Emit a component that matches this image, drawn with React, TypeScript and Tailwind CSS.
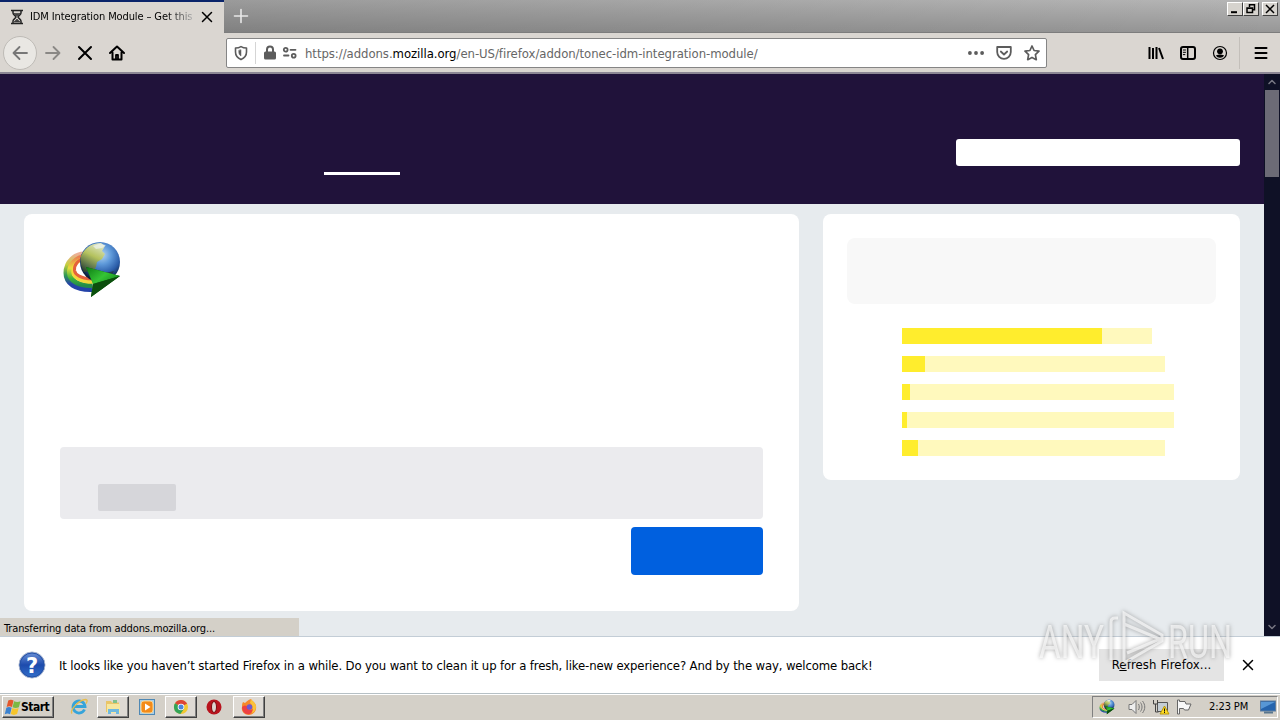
import type { ReactNode } from "react";
import clsx from "clsx";

interface Rating {
  total: number;
  filled: number;
}

const ratings: Rating[] = [
  { total: 250, filled: 200 },
  { total: 263, filled: 23 },
  { total: 272, filled: 8 },
  { total: 272, filled: 5 },
  { total: 263, filled: 16 },
];

function IdmLogo({ className }: { className?: string }) {
  return (
    <svg viewBox="0 0 60 60" className={className}>
      <defs>
        <radialGradient id="globe" cx="0.55" cy="0.32" r="0.66">
          <stop offset="0" stopColor="#b4d4f0" />
          <stop offset="0.35" stopColor="#5f9ada" />
          <stop offset="0.7" stopColor="#2a5ca8" />
          <stop offset="1" stopColor="#0a1a33" />
        </radialGradient>
        <linearGradient id="land" x1="0.7" y1="0" x2="0.3" y2="1">
          <stop offset="0" stopColor="#dfe6c8" />
          <stop offset="0.45" stopColor="#b4c25e" />
          <stop offset="1" stopColor="#3c4f1d" stopOpacity="0.7" />
        </linearGradient>
        <linearGradient id="arrow" x1="0" y1="0" x2="1" y2="0.6">
          <stop offset="0" stopColor="#0d7a12" />
          <stop offset="0.6" stopColor="#35c435" />
          <stop offset="1" stopColor="#1a9420" />
        </linearGradient>
        <linearGradient id="ringOuter" x1="0" y1="0" x2="0" y2="1">
          <stop offset="0" stopColor="#edb098" />
          <stop offset="0.3" stopColor="#c6cf3e" />
          <stop offset="0.6" stopColor="#2f9a53" />
          <stop offset="0.85" stopColor="#2442a8" />
        </linearGradient>
        <linearGradient id="ringMiddle" x1="0" y1="0" x2="0" y2="1">
          <stop offset="0" stopColor="#ea7b52" />
          <stop offset="0.4" stopColor="#e9dc3b" />
          <stop offset="0.75" stopColor="#3eb43a" />
          <stop offset="1" stopColor="#238a4b" />
        </linearGradient>
      </defs>
      <g fill="none">
        <path d="M24 14C13 13 4 22 4 33c0 10 9 17 26 16.500" stroke="url(#ringOuter)" strokeWidth="5" />
        <path d="M24 16.500C14 17 7 25 7.500 33c.5 7 8 13 23 12.500" stroke="url(#ringMiddle)" strokeWidth="5" />
        <path d="M24 18.500C16 19 10.500 26 11 32c.5 5 7 10 20 10" stroke="#f3d63b" strokeWidth="3.500" />
        <path d="M24 18C16 19 12 25 12.500 30.500c.5 4 6 8 18 8.500" stroke="#e5613b" strokeWidth="3" />
      </g>
      <circle cx="38" cy="22" r="20" fill="url(#globe)" />
      <path
        d="M19 16C24 6 31 3 39 3l4 3-3 5 3 3-3 5-5 3-1 5-3 4-9 1c-3-5-4-10-3-16z"
        fill="url(#land)"
      />
      <path d="M31 6l6-2 7 1-4 3-6 1z" fill="#eef4ee" opacity="0.7" />
      <path d="M43 33l9-2-4 7-7 4z" fill="#26342b" opacity="0.65" />
      <path d="M24 27l34 9-29 21 2-14z" fill="#0a5f0c" />
      <path d="M24 27l34 9-27 8z" fill="url(#arrow)" />
      <path d="M31 44l27-8-29 21z" fill="#0c4f0d" />
    </svg>
  );
}

function StrokeIcon({
  children,
  className = "size-4",
}: {
  children: ReactNode;
  className?: string;
}) {
  return (
    <svg
      viewBox="0 0 16 16"
      className={className}
      fill="none"
      stroke="currentColor"
      strokeWidth="2"
      strokeLinecap="round"
      strokeLinejoin="round"
    >
      {children}
    </svg>
  );
}

function CloseIcon({ className }: { className?: string }) {
  return (
    <StrokeIcon className={className}>
      <path d="M2 2l12 12M14 2L2 14" />
    </StrokeIcon>
  );
}

function WindowButton({ children, className }: { children: ReactNode; className?: string }) {
  return (
    <button
      className={clsx(
        "flex h-[14px] w-4 items-center justify-center border border-t-white border-l-white border-r-[#404040] border-b-[#404040] bg-[#d6d3ce]",
        className,
      )}
    >
      <svg viewBox="0 0 12 12" className="size-3 shrink-0" fill="none" stroke="#000" strokeWidth="1.5">
        {children}
      </svg>
    </button>
  );
}

function TabStrip() {
  return (
    <div className="flex h-[33px] shrink-0 bg-linear-to-b from-[#b6b6b6] to-[#969696]">
      <div className="flex w-[224px] items-center border-t-2 border-[#0a246a] bg-[#dad6d1] pb-px pl-[10px]">
        <svg viewBox="0 0 14 16" className="h-4 w-[14px] shrink-0" fill="none" stroke="#222" strokeWidth="1.5">
          <path d="M1 1.500h12M1 14.500h12M3 2v2c0 2 3 3 3 4s-3 2-3 4v2M11 2v2c0 2-3 3-3 4s3 2 3 4v2" />
          <path d="M4 4.500h6L7 7zM4 13l3-3 3 3z" fill="#444" strokeWidth="0.500" />
        </svg>
        <span className="mt-px ml-[6px] w-[164px] overflow-hidden bg-linear-to-r from-black from-80% to-[#bbb] bg-clip-text text-[11px] tracking-[-0.11px] whitespace-nowrap text-transparent">
          IDM Integration Module – Get this
        </span>
        <CloseIcon className="ml-[7px] size-3 shrink-0" />
      </div>
      <div className="flex flex-1 border-b border-[#7d7d7d] bg-linear-to-r from-black/15 to-transparent">
        <StrokeIcon className="mt-2 ml-[9px] size-4 text-[#e8e8e8]">
          <path d="M8 1.500v13M1.500 8h13" strokeWidth="1.600" />
        </StrokeIcon>
        <div className="mt-[2px] mr-[2px] ml-auto flex">
          <WindowButton>
            <path d="M2 9.200h6" strokeWidth="2" />
          </WindowButton>
          <WindowButton>
            <path d="M4.500 4V1.800h5v5H8M2 5h5.500v4.500H2zM2 5.200h5.500" />
          </WindowButton>
          <WindowButton className="ml-[3px]">
            <path d="M2 2l8 8M10 2l-8 8" />
          </WindowButton>
        </div>
      </div>
    </div>
  );
}

function UrlBar() {
  return (
    <div className="ml-[101px] flex h-[30px] w-[821px] items-center rounded-xs border border-[#858585] bg-white text-[#5c5c5c]">
      <StrokeIcon className="ml-[6px] size-4">
        <path d="M8 1.600C6.500 2.500 4.500 3 2.500 3v4c0 4 2 6 5.500 7.600C11.500 13 13.500 11 13.500 7V3c-2 0-4-.5-5.500-1.400z" strokeWidth="1.600" />
        <path d="M8 5v6C6.500 10 5.800 9 5.800 7V5.500z" fill="currentColor" strokeWidth="0.500" />
      </StrokeIcon>
      <div className="ml-[6px] h-[22px] w-px bg-[#d5d5d5]" />
      <StrokeIcon className="ml-[6px] size-4">
        <path d="M5 7V4.500a3 3 0 0 1 6 0V7" />
        <rect x="3" y="7.500" width="10" height="6" rx="0.500" fill="currentColor" />
      </StrokeIcon>
      <StrokeIcon className="ml-1 size-4">
        <g strokeWidth="1.800">
          <circle cx="3.700" cy="4.800" r="1.900" />
          <path d="M8.500 4.800H13.500M2 10.500h4.500" />
          <circle cx="11.700" cy="10.800" r="1.900" />
        </g>
      </StrokeIcon>
      <span className="mt-[2px] ml-[7px] text-[13px] tracking-[-0.05px] whitespace-nowrap text-[#666]">
        https://addons.<span className="text-black">mozilla.org</span>
        /en-US/firefox/addon/tonec-idm-integration-module/
      </span>
      <div className="mr-[6px] ml-auto flex gap-3">
        <StrokeIcon>
          <g fill="currentColor" stroke="none">
            <circle cx="1.900" cy="8" r="1.900" />
            <circle cx="8" cy="8" r="1.900" />
            <circle cx="14.100" cy="8" r="1.900" />
          </g>
        </StrokeIcon>
        <StrokeIcon>
          <path d="M1.200 2h13.600v5a6.800 6.800 0 0 1-13.600 0zM4.800 6.500L8 9.500l3.200-3" strokeWidth="1.800" />
        </StrokeIcon>
        <StrokeIcon>
          <path d="M8 1l2.100 4.500 4.900.7-3.600 3.500.9 5L8 12.400l-4.300 2.300.9-5L1 6.200l4.900-.7z" strokeWidth="1.700" />
        </StrokeIcon>
      </div>
    </div>
  );
}

function NavToolbar() {
  return (
    <div className="flex h-[41px] shrink-0 items-center border-b-2 border-b-[#8c8794] bg-[#dad6d1]">
      <button className="ml-[3px] flex size-[34px] shrink-0 items-center justify-center rounded-full border border-[#bebbb6] bg-[#e9e7e3] text-[#777]">
        <StrokeIcon className="size-4">
          <path d="M15 8H1.500M7.500 2L1.500 8l6 6" strokeWidth="1.800" />
        </StrokeIcon>
      </button>
      <StrokeIcon className="ml-2 size-4 text-[#8a8885]">
        <path d="M1 8h13.500M8.500 2l6 6-6 6" strokeWidth="1.800" />
      </StrokeIcon>
      <CloseIcon className="ml-4 size-4" />
      <StrokeIcon className="ml-4 size-4">
        <path d="M1 8l7-6.500L15 8M3.500 7.500v7h9v-7" />
        <path d="M7 14v-4h2v4" strokeWidth="1.800" />
      </StrokeIcon>
      <UrlBar />
      <StrokeIcon className="ml-[101px] size-4">
        <path d="M1.500 2v12M5 3v11M8.500 2v12M11 3l4 11" strokeLinecap="butt" />
      </StrokeIcon>
      <StrokeIcon className="ml-4 size-4">
        <rect x="1" y="2" width="14" height="12" rx="2" />
        <path d="M7.700 2v12" strokeWidth="1.500" />
        <path d="M3.300 5h2.200M3.300 7.300h2.200M3.300 9.600h1.600" strokeWidth="1" />
      </StrokeIcon>
      <StrokeIcon className="ml-4 size-4">
        <circle cx="8" cy="8" r="6.500" strokeWidth="1.200" />
        <circle cx="8" cy="6.300" r="2.900" fill="currentColor" stroke="none" />
        <path d="M3.800 10.500c3-1.500 5.400-1.500 8.400 0A5 5 0 0 1 8 12.700a5 5 0 0 1-4.200-2.200z" fill="currentColor" stroke="none" />
      </StrokeIcon>
      <div className="ml-[11px] h-8 w-px bg-[#c3bfba]" />
      <StrokeIcon className="ml-[13px] size-4">
        <path d="M2.500 3h11M2.500 8h11M2.500 13h11" />
      </StrokeIcon>
    </div>
  );
}

function AddonCard() {
  return (
    <div className="flex h-[397px] w-[775px] flex-col rounded-lg bg-white px-9 pt-[26px]">
      <IdmLogo className="ml-[2px] size-[60px]" />
      <div className="mt-[147px] h-[72px] shrink-0 rounded bg-[#ebebee] pt-[37px] pl-[38px]">
        <div className="h-[27px] w-[78px] rounded-xs bg-[#d6d6da]" />
      </div>
      <button className="mt-2 h-12 w-[132px] shrink-0 self-end rounded bg-[#0060df]" />
    </div>
  );
}

function RatingsCard() {
  return (
    <div className="h-[266px] w-[417px] rounded-lg bg-white px-6 pt-6">
      <div className="h-[66px] rounded-lg bg-[#f8f8f8]" />
      <div className="mt-6 ml-[55px] flex flex-col gap-3">
        {ratings.map((rating, i) => (
          <div key={i} className="h-4 bg-[#fff9bd]" style={{ width: rating.total }}>
            <div className="h-4 bg-[#ffed2d]" style={{ width: rating.filled }} />
          </div>
        ))}
      </div>
    </div>
  );
}

function Page() {
  return (
    <div className="relative flex h-[562px] shrink-0">
      <main className="flex flex-1 flex-col bg-[#e7ebee]">
        <header className="flex h-[130px] items-start bg-[#20123a]">
          <div className="mt-[98px] ml-[324px] h-[3px] w-[76px] bg-white" />
          <div className="mt-[65px] mr-6 ml-auto h-[27px] w-[284px] rounded-[3px] bg-white" />
        </header>
        <div className="flex gap-6 px-6 pt-[10px]">
          <AddonCard />
          <RatingsCard />
        </div>
      </main>
      <div className="flex w-4 flex-col items-center bg-[#0f1126] text-[#777782]">
        <StrokeIcon className="mt-1 size-2">
          <path d="M2 11l6-6 6 6" strokeWidth="3" />
        </StrokeIcon>
        <div className="mt-1 h-[87px] w-[14px] bg-[#6c6b76]" />
        <StrokeIcon className="mt-auto mb-[5px] size-2">
          <path d="M2 5l6 6 6-6" strokeWidth="3" />
        </StrokeIcon>
      </div>
      <div className="absolute bottom-0 left-0 flex h-[18px] w-[299px] items-center bg-[#d4d0c8] pt-1 pl-[4px] text-[11px] tracking-[-0.13px]">
        Transferring data from addons.mozilla.org...
      </div>
    </div>
  );
}

function Watermark() {
  return (
    <div className="pointer-events-none absolute top-[606px] left-[1035px]">
      <svg viewBox="0 0 204 66" className="h-[66px] w-[204px] drop-shadow-[0_0_2px_#777]">
        <g fill="#fff" fillOpacity="0.65" fontFamily="Roboto, sans-serif" fontSize="47">
          <text x="4" y="52" textLength="65" lengthAdjust="spacingAndGlyphs">ANY</text>
          <text x="133" y="52" textLength="64" lengthAdjust="spacingAndGlyphs">RUN</text>
        </g>
        <g fill="none" stroke="#fff" strokeOpacity="0.65" strokeWidth="3">
          <path d="M83 12h-3q-4 0-4 4v38" />
          <path d="M89 56V7l38 22v6L89 57M89 18l36 15-33 14" />
        </g>
      </svg>
    </div>
  );
}

function NotificationBar() {
  return (
    <div className="flex h-[57px] shrink-0 items-center border-t border-[#c3cdd6] bg-white text-[13px]">
      <svg viewBox="0 0 28 28" className="ml-[18px] size-7">
        <defs>
          <linearGradient id="help" x1="0" y1="0" x2="0" y2="1">
            <stop offset="0" stopColor="#6f94d8" />
            <stop offset="0.500" stopColor="#1d4bad" />
            <stop offset="1" stopColor="#3471cc" />
          </linearGradient>
        </defs>
        <circle cx="14" cy="14" r="13" fill="url(#help)" stroke="#a8b4cd" />
        <circle cx="14" cy="14" r="12" fill="none" stroke="#2451a6" />
        <text x="14" y="21.500" fill="#fff" fontSize="21" fontWeight="bold" textAnchor="middle" fontFamily="DejaVu Sans">
          ?
        </text>
      </svg>
      <span className="mt-[2px] ml-[13px] tracking-[-0.14px] whitespace-nowrap">
        It looks like you haven’t started Firefox in a while. Do you want to clean it up for a fresh, like-new experience? And by the way, welcome back!
      </span>
      <button className="mr-[18px] ml-auto h-8 w-[125px] bg-[#e4e4e4] tracking-[0.12px] whitespace-nowrap">
        R<span className="underline">e</span>fresh Firefox...
      </button>
      <CloseIcon className="mr-[26px] size-3" />
    </div>
  );
}

function TaskButton({ children }: { children: ReactNode }) {
  return (
    <div className="flex h-[22px] w-8 items-center justify-center border border-t-white border-l-white border-r-[#404040] border-b-[#404040] bg-[#dedad4] shadow-[inset_-1px_-1px_#808080]">
      {children}
    </div>
  );
}

function Taskbar() {
  return (
    <footer className="flex h-[27px] shrink-0 items-center border-t border-[#b6c0c5] bg-[#d4d0c8] pb-px pt-px shadow-[inset_0_1px_white]">
      <button className="ml-[2px] flex h-[22px] w-[52px] items-center border border-t-white border-l-white border-r-[#404040] border-b-[#404040] pl-px text-[12px] font-bold tracking-[-0.5px] shadow-[inset_-1px_-1px_#808080]">
        <svg viewBox="0 0 16 16" className="size-[17px] shrink-0">
          <path d="M4 1.500c2-1 3-1 5 0L7.500 7.500c-2-1-3-1-5 0z" fill="#e4572b" />
          <path d="M9.500 2c2 1 4 1 6 0L14 7.700c-2 1-4 1-6 0z" fill="#7cb843" />
          <path d="M2.200 8.300c2-1 3-1 5 0l-1.500 6c-2-1-3-1-5 0z" fill="#3c82cf" />
          <path d="M7.800 8.500c2 1 4 1 6 0l-1.500 5.700c-2 1-4 1-6 0z" fill="#f6c52c" />
        </svg>
        Start
      </button>
      <svg viewBox="0 0 18 18" className="ml-[16px] size-[18px]">
        <path d="M14.500 11.500A6 6 0 1 1 15 8.500H4" fill="none" stroke="#36a4da" strokeWidth="2.800" />
        <path d="M2 15.500C-.5 12 9 2 15.500 1.500c2.500 0 1.500 2.500.5 4" fill="none" stroke="#e5bc4e" strokeWidth="1.400" />
      </svg>
      <div className="ml-[9px]">
        <TaskButton>
          <svg viewBox="0 0 18 18" className="size-[18px]">
            <path d="M2 3h5l1 1.500h7V14H2z" fill="#e9c568" />
            <path d="M3 6h13v9H3z" fill="#f7e79f" />
            <path d="M4 16v-5h11v5h-3v-2H7v2z" fill="#70b9df" />
            <path d="M9 2h4v3H9z" fill="#82c18a" />
          </svg>
        </TaskButton>
      </div>
      <svg viewBox="0 0 16 16" className="ml-[10px] size-4">
        <rect x="0.500" y="0.500" width="15" height="15" fill="#a9cfe8" stroke="#4f88b4" />
        <rect x="2" y="2" width="12" height="12" rx="3" fill="#f38b19" stroke="#fbd38c" />
        <path d="M6 4.500v7l5.500-3.500z" fill="#fff" />
      </svg>
      <div className="ml-[10px]">
        <TaskButton>
          <svg viewBox="0 0 16 16" className="size-4">
            <circle cx="8" cy="8" r="7" fill="#f1c832" />
            <path d="M8 8L2 4.300a7 7 0 0 1 12.100.2z" fill="#dc4537" />
            <path d="M8 8L2 4.300A7 7 0 0 0 7.300 15L11 10z" fill="#33a457" />
            <circle cx="8" cy="8" r="3.300" fill="#fff" />
            <circle cx="8" cy="8" r="2.500" fill="#4a86dc" />
          </svg>
        </TaskButton>
      </div>
      <svg viewBox="0 0 16 16" className="ml-[9px] size-4">
        <circle cx="8" cy="8" r="7.500" fill="#b8131d" />
        <ellipse cx="8" cy="8" rx="2.500" ry="5.500" fill="#ddd4cf" stroke="#7d080d" />
      </svg>
      <div className="ml-[11px]">
        <TaskButton>
          <svg viewBox="0 0 18 18" className="size-[18px]">
            <path d="M3 4l2 1c2-2 3-3 6-4 1 2 4 3 5 7 1 5-3 9-7 9-5 0-8-4-7-8 0-2 0-3 1-5z" fill="#f6892a" />
            <path d="M11 1c1 2 4 3 5 7 0 3-1 6-4 7 1-5 1-8-2-10z" fill="#fbc238" />
            <path d="M2 9c2-2 4-2 6 0-1 2 2 4 5 2-1 4-3 6-6 5-3 0-5-4-5-7z" fill="#ed4143" />
            <circle cx="9.500" cy="9" r="2.800" fill="#6d58d0" />
          </svg>
        </TaskButton>
      </div>
      <div className="mr-[2px] ml-auto flex h-[22px] w-[186px] items-center border border-t-[#808080] border-r-white border-b-white border-l-[#808080] pl-[6px]">
        <IdmLogo className="size-4 shrink-0" />
        <svg viewBox="0 0 18 16" className="ml-[13px] h-4 w-[18px] shrink-0" fill="#eee" stroke="#777">
          <path d="M1 5.500h3l4-4v13l-4-4H1z" />
          <path d="M10.500 5c1 2 1 4 0 6M12.500 3.500c2 3 2 6 0 9M14.500 2c3 4 3 8 0 12" fill="none" />
        </svg>
        <svg viewBox="0 0 18 16" className="ml-[6px] h-4 w-[18px] shrink-0" fill="none" stroke="#555">
          <path d="M5.500 3.500h10v9h-10z" fill="#c5ced5" />
          <path d="M1.500 1v4h4V1M3.500 5v8h3" stroke="#444" />
          <path d="M12.500 7l4.500 8H8z" fill="#ffdc22" stroke="#b9980a" />
          <path d="M12.500 9.500v3M12.500 13v1" stroke="#111" />
        </svg>
        <svg viewBox="0 0 16 16" className="ml-[6px] size-4 shrink-0" fill="#f8f8f8" stroke="#666">
          <path d="M1.500 1v14h2V9.500h4l1 1.500h4l2.500-6h-5L9 2.500H3.500V1z" />
        </svg>
        <span className="mt-px ml-[17px] text-[11px] tracking-[-0.1px] whitespace-nowrap">2:23 PM</span>
        <svg viewBox="0 0 16 14" className="ml-3 h-[14px] w-4 shrink-0">
          <rect x="0.500" y="1" width="15" height="10" fill="#2564ad" stroke="#5d7c9e" />
          <path d="M1 2h14L1 9z" fill="#5797d5" />
          <path d="M4 11.500h9v2H4z" fill="#59768e" />
        </svg>
      </div>
    </footer>
  );
}

export default function App() {
  return (
    <div className="relative flex h-[720px] w-[1280px] flex-col overflow-hidden bg-white font-['DejaVu_Sans_Condensed','DejaVu_Sans',sans-serif] text-black">
      <TabStrip />
      <NavToolbar />
      <Page />
      <NotificationBar />
      <Taskbar />
      <Watermark />
    </div>
  );
}
